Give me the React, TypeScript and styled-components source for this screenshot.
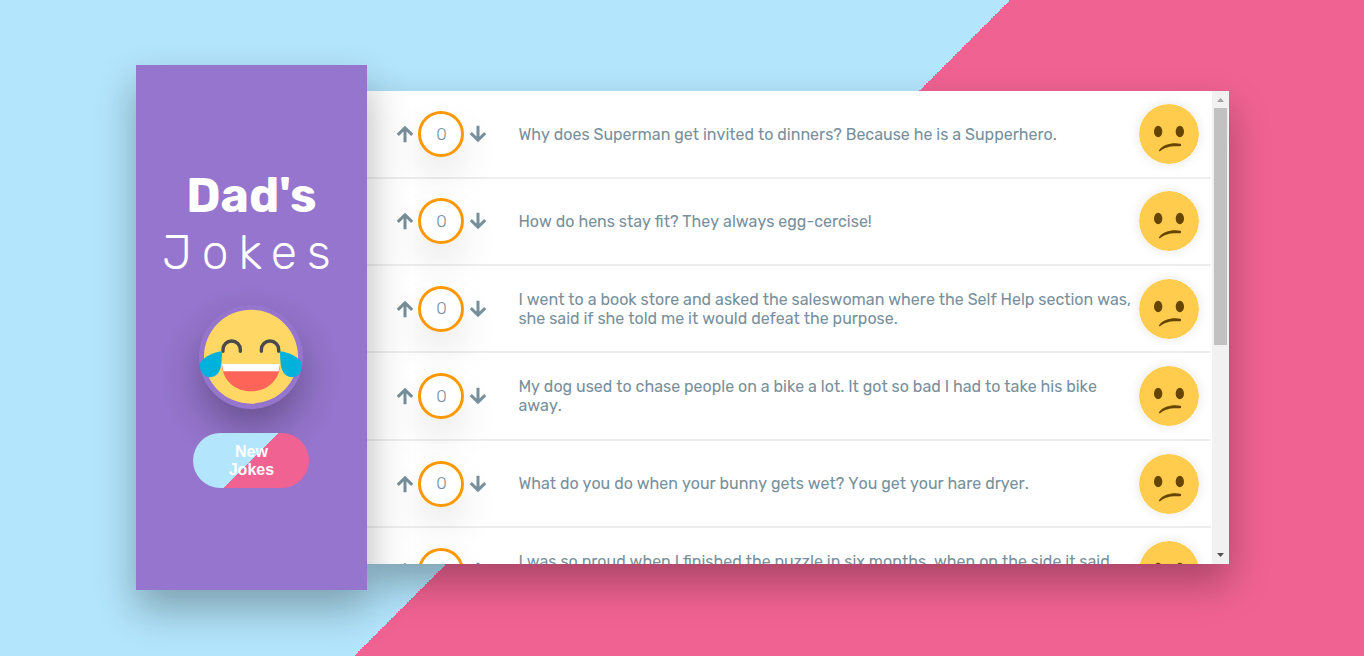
import React, { useRef, useState } from "react";
import styled, { createGlobalStyle } from "styled-components";

const split = "linear-gradient(-45deg, #f06292 50%, #b3e5fc 50%)";
const rubik = 'Rubik, Roboto, "Liberation Sans", sans-serif';

const GlobalStyle = createGlobalStyle`
  *, *::before, *::after { box-sizing: border-box; }
  body {
    margin: 0;
    height: 100vh;
    overflow: hidden;
    background: ${split};
    font-family: ${rubik};
  }
`;

const Page = styled.main`
  display: flex;
  align-items: center;
  justify-content: center;
  height: 100vh;
  padding-bottom: 1px;
`;

const JokeList = styled.div`
  display: flex;
  align-items: center;
  width: 80%;
  height: 80vh;
`;

const Sidebar = styled.aside`
  display: flex;
  flex: 0 0 231px;
  flex-direction: column;
  align-items: center;
  justify-content: center;
  height: 100%;
  padding-right: 1px;
  background: #9575cd;
  box-shadow: 0 19px 38px rgba(0, 0, 0, 0.3);
  z-index: 2;
`;

const Title = styled.h1`
  margin: 0 0 24px;
  color: #fff;
  font-size: 48px;
  font-weight: 300;
  line-height: 57px;
  text-align: center;
  letter-spacing: 10px;
`;

const TitleStrong = styled.span`
  display: block;
  font-weight: 700;
  letter-spacing: 0;
`;

const Laugh = styled.svg`
  width: 104px;
  height: 104px;
  margin-bottom: 24px;
  border-radius: 50%;
  background: #9575cd;
  overflow: visible;
  box-shadow: 0 19px 38px rgba(0, 0, 0, 0.3);
`;

const NewJokes = styled.button`
  width: 116px;
  height: 55px;
  padding: 10px 32px 8px;
  border: 0;
  border-radius: 28px;
  background: ${split};
  color: #fff;
  font: 700 16px/18px "Liberation Sans", Arial, sans-serif;
  cursor: pointer;
`;

const Panel = styled.section`
  display: flex;
  flex: 1;
  min-width: 0;
  height: 90%;
  margin-right: -1px;
  background: #fff;
  box-shadow: 0 19px 38px rgba(0, 0, 0, 0.3);
`;

const Jokes = styled.div`
  display: grid;
  flex: 1;
  grid-auto-rows: 18.5%;
  height: 100%;
  min-width: 0;
  overflow-y: scroll;
  scrollbar-width: none;
`;

const Row = styled.article`
  display: flex;
  align-items: center;
  padding-right: 12px;
  margin-right: 1px;
  border-bottom: 2px solid #eee;
`;

const Votes = styled.div`
  display: flex;
  align-items: center;
  gap: 4px;
  width: 124px;
  padding-left: 28px;
  margin-right: 27px;
`;

const VoteButton = styled.button`
  display: flex;
  justify-content: center;
  width: 19px;
  padding: 0;
  border: 0;
  background: none;
  color: #78909c;
  cursor: pointer;
`;

const Score = styled.span`
  display: flex;
  flex: 0 0 46px;
  align-items: center;
  justify-content: center;
  height: 46px;
  padding-bottom: 1px;
  border: 3px solid #ff9800;
  border-radius: 50%;
  color: #78909c;
  font-size: 17px;
  font-weight: 300;
  box-shadow: 0 19px 38px rgba(0, 0, 0, 0.1);
`;

const Text = styled.p`
  flex: 1;
  margin: 0 6px 0 0;
  color: #78909c;
  font-size: 16px;
  font-kerning: none;
  line-height: 19px;
`;

const Face = styled.svg`
  flex: none;
  width: 60px;
  height: 60px;
  border-radius: 50%;
  box-shadow: 0 0 12px rgba(0, 0, 0, 0.1);
`;

const Bar = styled.div`
  display: flex;
  flex: 0 0 17px;
  flex-direction: column;
  background: #f1f1f1;
`;

const BarButton = styled.button`
  display: flex;
  align-items: center;
  justify-content: center;
  height: 17px;
  padding: 0;
  border: 0;
  background: none;
`;

const Track = styled.div`
  flex: 1;
  padding: 0 2px;
`;

const Thumb = styled.div`
  height: 54%;
  background: #c1c1c1;
`;

const jokes = [
  "Why does Superman get invited to dinners? Because he is a Supperhero.",
  "How do hens stay fit? They always egg-cercise!",
  "I went to a book store and asked the saleswoman where the Self Help section was, she said if she told me it would defeat the purpose.",
  "My dog used to chase people on a bike a lot. It got so bad I had to take his bike away.",
  "What do you do when your bunny gets wet? You get your hare dryer.",
  "I was so proud when I finished the puzzle in six months, when on the side it said three to four years.",
  "What do you call a fake noodle? An impasta.",
  "Why did the scarecrow win an award? He was outstanding in his field.",
  "What do you call cheese that isn't yours? Nacho cheese.",
  "Why can't a bicycle stand on its own? It is two-tired.",
];

function Arrow({ down }: { down?: boolean }) {
  return (
    <svg width="18" height="18" viewBox="0 0 18 18" fill="none" stroke="currentColor" strokeWidth="3" aria-hidden="true">
      <path d={down ? "M9 .8V15M1.800 8.200 9 15.200l7.200-7" : "M9 17.200V3M1.800 9.800 9 2.800l7.200 7"} />
    </svg>
  );
}

function JokeRow({ text }: { text: string }) {
  const [votes, setVotes] = useState(0);
  return (
    <Row>
      <Votes>
        <VoteButton aria-label="Vote up" onClick={() => setVotes(votes + 1)}><Arrow /></VoteButton>
        <Score>{votes}</Score>
        <VoteButton aria-label="Vote down" onClick={() => setVotes(votes - 1)}><Arrow down /></VoteButton>
      </Votes>
      <Text>{text}</Text>
      <Face viewBox="0 0 36 36" role="img" aria-label="Confused face">
        <circle cx="18" cy="18" r="18" fill="#ffcc4d" />
        <g fill="#664500">
          <ellipse cx="11.5" cy="16.5" rx="2.5" ry="3.5" />
          <ellipse cx="24.5" cy="16.5" rx="2.5" ry="3.5" />
          <path d="M12 27.800C14 24.300 20.500 22.900 24.800 23.900c.8.300.6 1.500-.3 1.500-4.500-.4-8.800.2-11.900 2.900-.4.300-.8 0-.6-.5z" />
        </g>
      </Face>
    </Row>
  );
}

export default function App() {
  const list = useRef<HTMLDivElement>(null);
  const [offset, setOffset] = useState(0);
  const onScroll = () => {
    const el = list.current;
    if (el) setOffset((el.scrollTop / (el.scrollHeight - el.clientHeight)) * 85);
  };
  const step = (by: number) => list.current?.scrollBy({ top: by });
  return (
    <Page>
      <GlobalStyle />
      <JokeList>
        <Sidebar>
          <Title><TitleStrong>Dad's</TitleStrong> Jokes</Title>
          <Laugh viewBox="57 45 312 312" role="img" aria-label="Laughing face">
            <circle cx="213" cy="200" r="141" fill="#ffd764" />
            <path d="M129 184v-5a26 26 0 0 1 52 0v5M244 184v-5a26 26 0 0 1 52 0v5" fill="none" stroke="#494949" strokeWidth="10" strokeLinecap="round" />
            <path d="M126 222h174c0 46-37 82-87 82s-87-36-87-82z" fill="#ff6459" />
            <path d="M126 222h174l-4 22H130z" fill="#fff" />
            <path d="M126 184c-1 32-1 55-14 68-16 15-38 12-47-5-5-9-6-19-5-27 12-20 38-32 66-36z" fill="#00b1dc" />
            <path d="M300 184c1 32 1 55 14 68 16 15 38 12 47-5 5-9 6-19 5-27-12-20-38-32-66-36z" fill="#00b1dc" />
          </Laugh>
          <NewJokes type="button">New Jokes</NewJokes>
        </Sidebar>
        <Panel>
          <Jokes ref={list} onScroll={onScroll}>
            {jokes.map((joke) => <JokeRow key={joke} text={joke} />)}
          </Jokes>
          <Bar>
            <BarButton aria-label="Scroll up" onClick={() => step(-40)}>
              <svg width="7" height="4" viewBox="0 0 7 4"><path d="M0 4 3.500 0 7 4z" fill="#a3a3a3" /></svg>
            </BarButton>
            <Track><Thumb style={{ transform: `translateY(${offset}%)` }} /></Track>
            <BarButton aria-label="Scroll down" onClick={() => step(40)}>
              <svg width="7" height="4" viewBox="0 0 7 4"><path d="M0 0 3.500 4 7 0z" fill="#505050" /></svg>
            </BarButton>
          </Bar>
        </Panel>
      </JokeList>
    </Page>
  );
}
